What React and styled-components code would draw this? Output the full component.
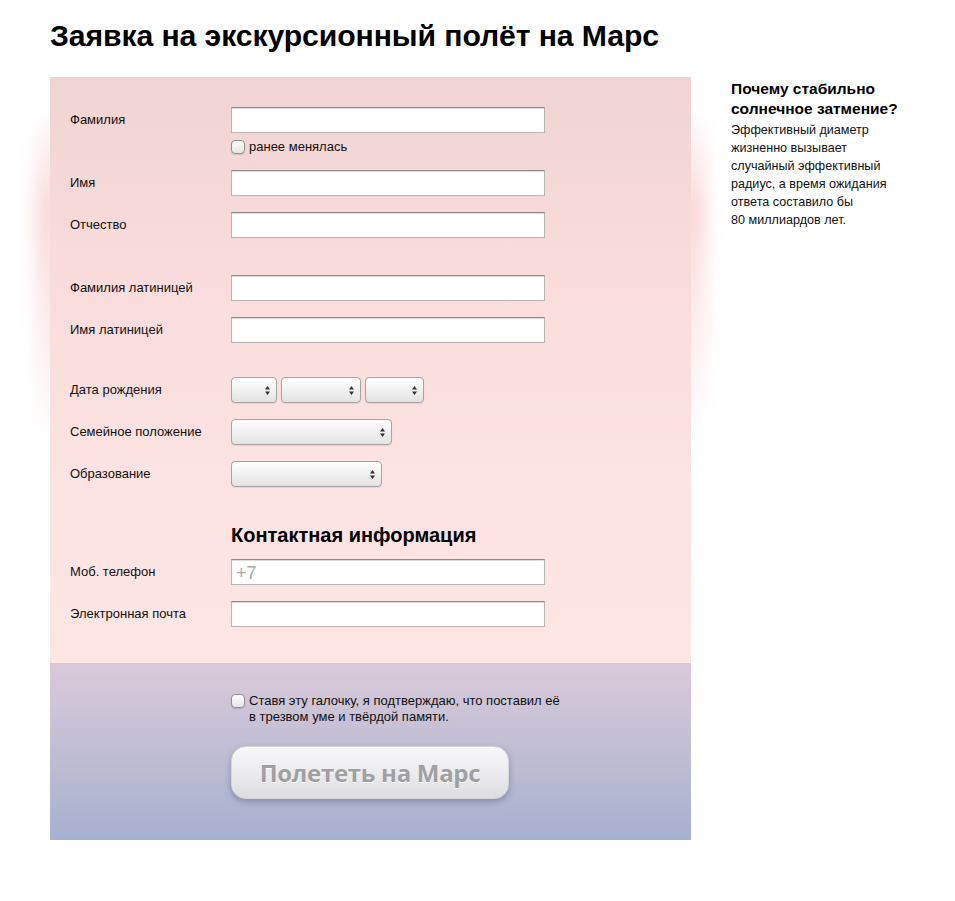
import React from 'react';
import styled, { createGlobalStyle } from 'styled-components';

const GlobalStyle = createGlobalStyle`
  html, body {
    margin: 0;
    padding: 0;
    background: #fff;
  }
  body {
    font-family: "Liberation Sans", Arial, sans-serif;
    color: #111;
  }
`;

const Page = styled.div`
  padding: 18px 0 60px 50px;
  isolation: isolate;
`;

const Title = styled.h1`
  margin: 0 0 23px;
  font-size: 30.2px;
  line-height: 36px;
  font-weight: bold;
  letter-spacing: -0.1px;
  color: #000;
`;

const Layout = styled.div`
  display: flex;
  align-items: flex-start;
  gap: 40px;
`;

const Panel = styled.form`
  position: relative;
  width: 641px;
  flex-shrink: 0;

  &::before,
  &::after {
    content: '';
    position: absolute;
    top: 30px;
    width: 28px;
    height: 340px;
    z-index: -1;
    background: linear-gradient(rgba(250, 200, 200, 0), rgba(246, 185, 188, 0.6) 30%, rgba(248, 200, 200, 0.3) 70%, rgba(250, 215, 215, 0));
    filter: blur(9px);
  }
  &::before { left: -14px; }
  &::after { right: -14px; }
`;

const FormArea = styled.div`
  padding: 30px 0 36px 20px;
  background: linear-gradient(#f0d3d3, #fadcdc 35%, #fde3e3 70%, #fee6e5);
`;

const Group = styled.div`
  display: flex;
  flex-direction: column;
  gap: 16px;
  margin-top: ${p => p.$top || 0}px;
`;

const Row = styled.div`
  display: grid;
  grid-template-columns: 161px auto;
  align-items: start;
`;

const Label = styled.label`
  font-size: 13px;
  line-height: 26px;
  color: #111;
`;

const Field = styled.div`
  display: flex;
  flex-direction: column;
  align-items: flex-start;
`;

const TextInput = styled.input`
  box-sizing: border-box;
  width: 314px;
  height: 26px;
  margin: 0;
  padding: 2px 4px 0;
  border: 1px solid #b9b3b3;
  border-top-color: #8f8a8a;
  background: #fff;
  box-shadow: inset 0 1px 1px rgba(0, 0, 0, 0.15);
  font-family: "Liberation Sans", Arial, sans-serif;
  font-size: 18px;
  outline: none;

  &::placeholder { color: #a9a9a9; }
`;

const CheckLine = styled.label`
  display: flex;
  align-items: flex-start;
  gap: 4px;
  margin-top: ${p => p.$big ? 0 : 7}px;
  font-size: 13px;
  line-height: ${p => p.$big ? 16 : 14}px;
  color: #111;
`;

const CheckBox = styled.input.attrs({ type: 'checkbox' })`
  appearance: none;
  box-sizing: border-box;
  flex-shrink: 0;
  width: 14px;
  height: 14px;
  margin: ${p => p.$offset || 0}px 0 0;
  border: 1px solid #8e8e8e;
  border-radius: 4px;
  background: linear-gradient(#fdfdfd, #e4e4e4);
  box-shadow: 0 1px 1px rgba(0, 0, 0, 0.12);
`;

const SelectRow = styled.div`
  display: flex;
  gap: 4px;
`;

const SelectBox = styled.div`
  position: relative;
  width: ${p => p.$w}px;
  height: 26px;
`;

const Select = styled.select`
  appearance: none;
  box-sizing: border-box;
  width: 100%;
  height: 100%;
  margin: 0;
  border: 1px solid #a7a2a2;
  border-radius: 4px;
  background: linear-gradient(#ffffff, #f1f1f1 50%, #e3e3e3);
  box-shadow: 0 1px 1px rgba(0, 0, 0, 0.08);
  font-family: "Liberation Sans", Arial, sans-serif;
  font-size: 13px;
`;

const Arrows = styled.svg`
  position: absolute;
  right: 7px;
  top: 9px;
  width: 5px;
  height: 9px;
  pointer-events: none;
`;

const SectionTitle = styled.h2`
  margin: 36px 0 12px 161px;
  font-size: 20px;
  line-height: 24px;
  font-weight: bold;
  color: #000;
`;

const Footer = styled.div`
  padding: 30px 0 41px 181px;
  background: linear-gradient(#d9cad9, #c3bfd4 45%, #a6b0cf);
`;

const SubmitButton = styled.button`
  display: block;
  width: 278px;
  height: 53px;
  margin-top: 21px;
  border: 1px solid #d5d5dc;
  border-radius: 15px;
  background: linear-gradient(#f7f7f9, #ececef 50%, #dcdce1);
  box-shadow: 0 3px 6px rgba(60, 60, 90, 0.35), inset 0 1px 0 #fff;
  color: #a0a0a2;
  font-family: "Open Sans", "Liberation Sans", sans-serif;
  font-size: 24px;
  font-weight: bold;
  letter-spacing: -0.3px;
  text-shadow: 0 1px 0 #fff;
`;

const Aside = styled.aside`
  width: 180px;
  padding-top: 2px;
`;

const AsideTitle = styled.h3`
  margin: 0 0 2px;
  font-size: 15.5px;
  line-height: 20px;
  font-weight: bold;
  color: #000;
`;

const AsideText = styled.p`
  margin: 0;
  font-size: 12.6px;
  line-height: 18px;
  color: #111;
`;

const ArrowIcon = () => (
  <Arrows viewBox="0 0 5 9">
    <path d="M2.5 0 L5 3.5 L0 3.5 Z M2.5 9 L5 5.5 L0 5.5 Z" fill="#333" />
  </Arrows>
);

const Dropdown = ({ w }) => (
  <SelectBox $w={w}>
    <Select><option></option></Select>
    <ArrowIcon />
  </SelectBox>
);

const InputRow = ({ label, placeholder, children }) => (
  <Row>
    <Label>{label}</Label>
    <Field>
      <TextInput placeholder={placeholder} />
      {children}
    </Field>
  </Row>
);

export default function App() {
  return (
    <Page>
      <GlobalStyle />
      <Title>Заявка на экскурсионный полёт на Марс</Title>
      <Layout>
        <Panel onSubmit={e => e.preventDefault()}>
          <FormArea>
            <Group>
              <InputRow label="Фамилия">
                <CheckLine>
                  <CheckBox />
                  ранее менялась
                </CheckLine>
              </InputRow>
              <InputRow label="Имя" />
              <InputRow label="Отчество" />
            </Group>

            <Group $top={37}>
              <InputRow label="Фамилия латиницей" />
              <InputRow label="Имя латиницей" />
            </Group>

            <Group $top={34}>
              <Row>
                <Label>Дата рождения</Label>
                <SelectRow>
                  <Dropdown w={46} />
                  <Dropdown w={80} />
                  <Dropdown w={59} />
                </SelectRow>
              </Row>
              <Row>
                <Label>Семейное положение</Label>
                <Field><Dropdown w={161} /></Field>
              </Row>
              <Row>
                <Label>Образование</Label>
                <Field><Dropdown w={151} /></Field>
              </Row>
            </Group>

            <SectionTitle>Контактная информация</SectionTitle>
            <Group>
              <InputRow label="Моб. телефон" placeholder="+7" />
              <InputRow label="Электронная почта" />
            </Group>
          </FormArea>

          <Footer>
            <CheckLine $big>
              <CheckBox $offset={1} />
              <span>
                Ставя эту галочку, я подтверждаю, что поставил её<br />
                в трезвом уме и твёрдой памяти.
              </span>
            </CheckLine>
            <SubmitButton type="submit">Полететь на Марс</SubmitButton>
          </Footer>
        </Panel>

        <Aside>
          <AsideTitle>Почему стабильно солнечное затмение?</AsideTitle>
          <AsideText>
            Эффективный диаметр жизненно вызывает случайный эффективный радиус, а время ожидания ответа составило бы 80&nbsp;миллиардов лет.
          </AsideText>
        </Aside>
      </Layout>
    </Page>
  );
}
